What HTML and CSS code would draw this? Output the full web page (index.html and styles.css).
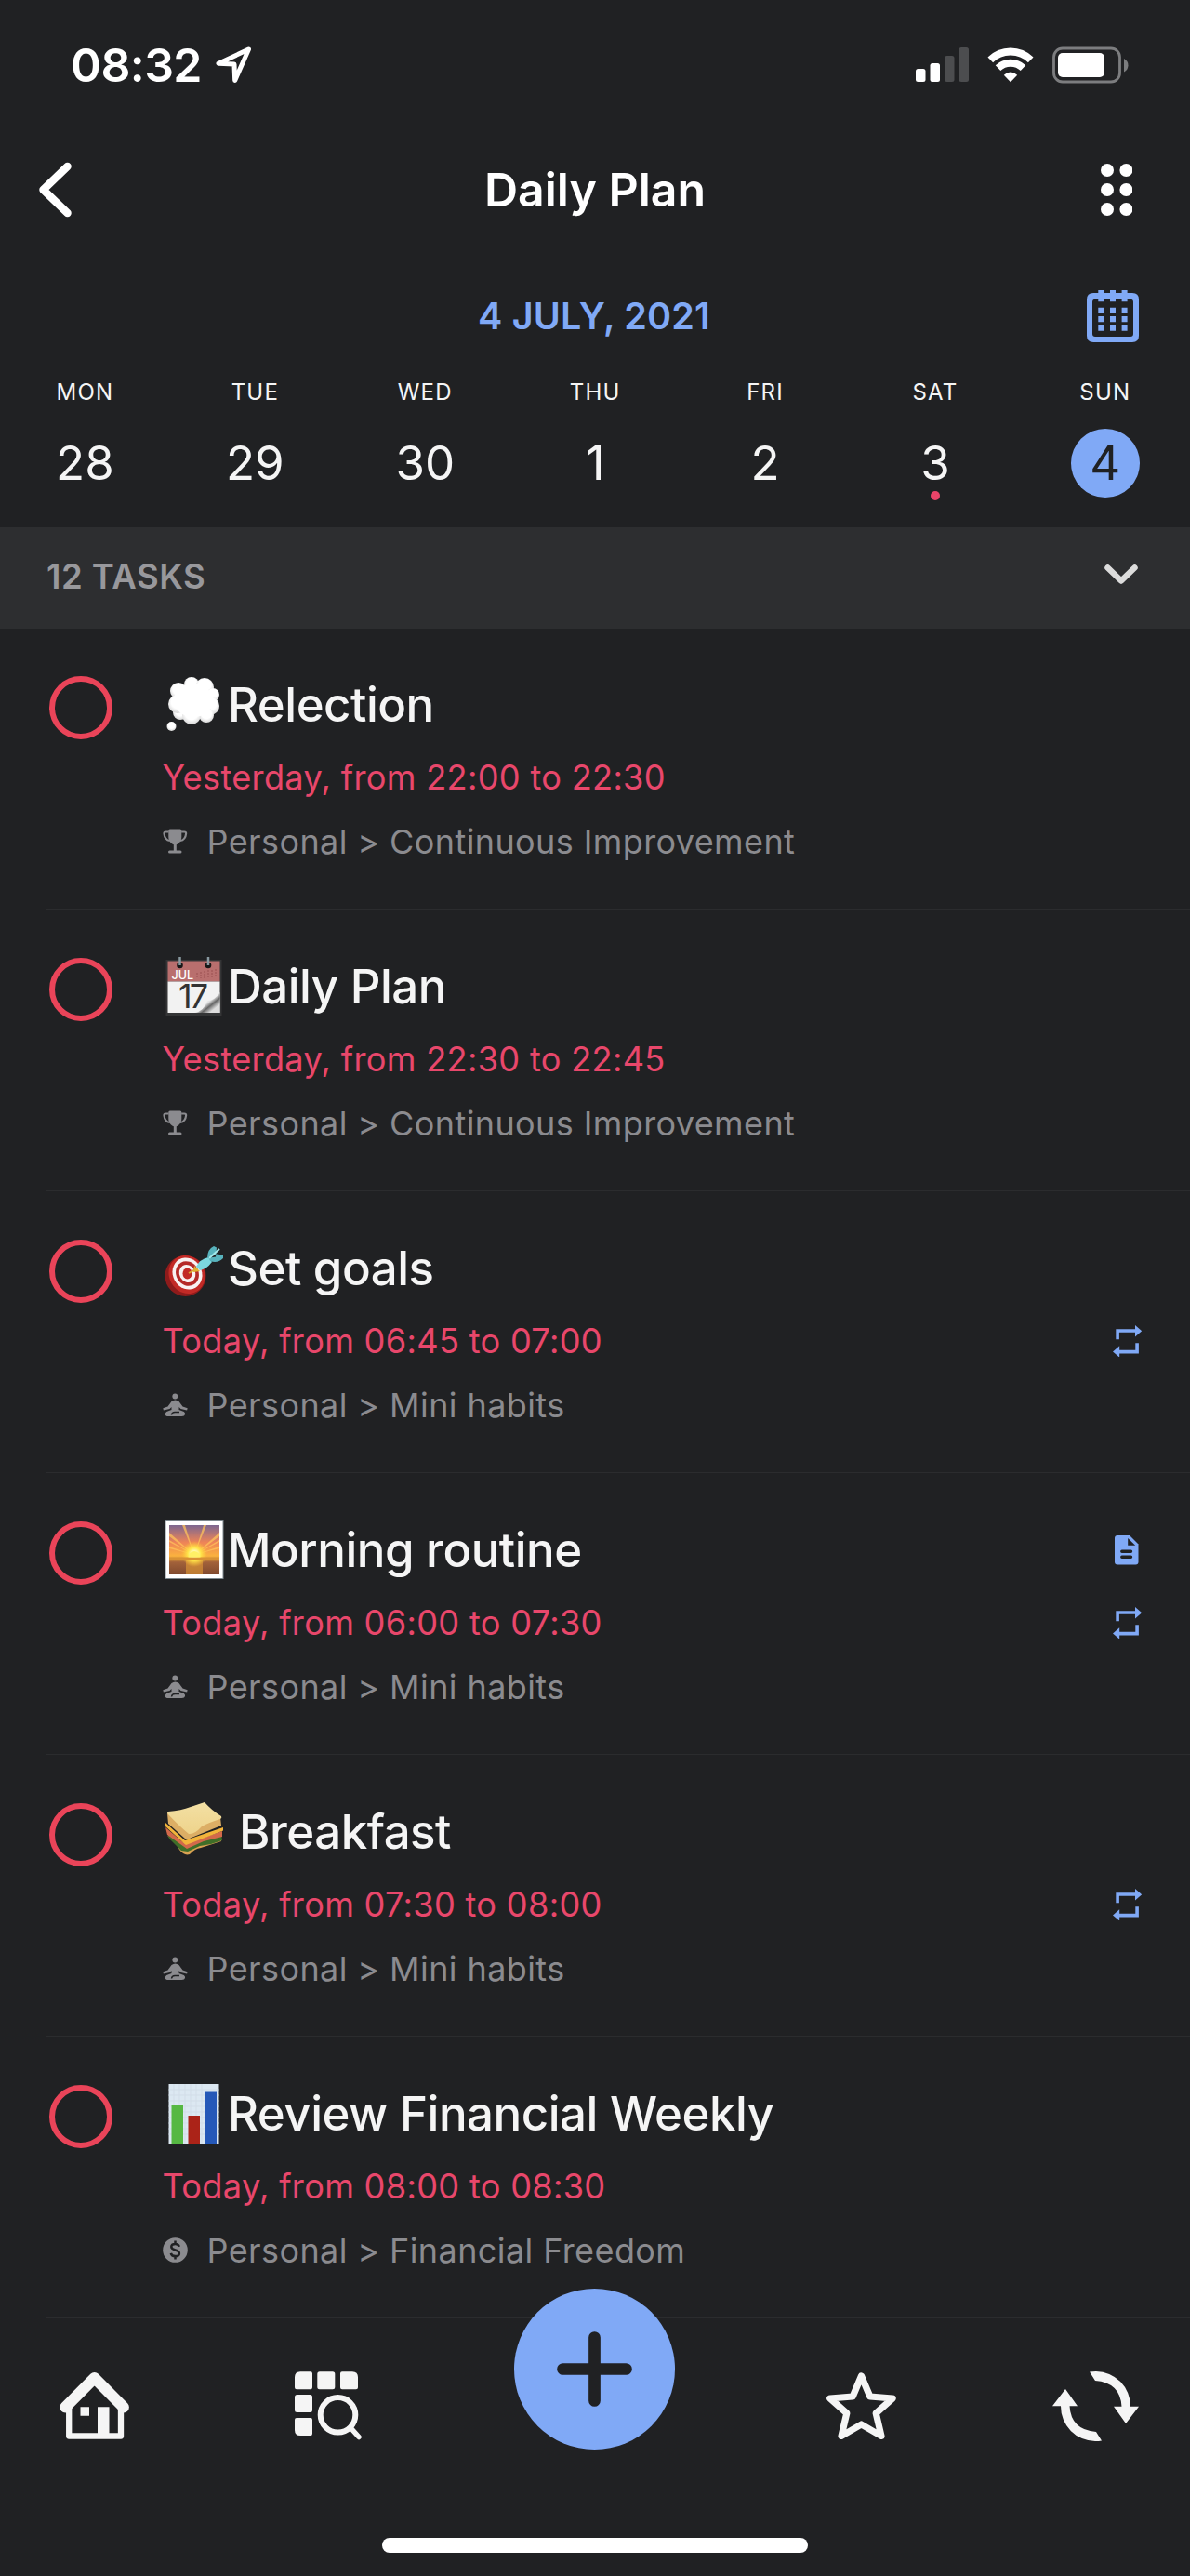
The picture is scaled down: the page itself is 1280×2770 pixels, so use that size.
FILE: index.html
```html
<!DOCTYPE html>
<html lang="en">
<head>
<meta charset="utf-8">
<title>Daily Plan</title>
<link rel="stylesheet" href="styles.css">
</head>
<body>
<svg class="defs" aria-hidden="true">
  <defs>
    <symbol id="repeat" viewBox="0 0 31.2 34.6">
      <g id="repeat-half"><path d="M5.1 15.3V6H25" fill="none" stroke="currentColor" stroke-width="3.6"/><path d="M24 0v12.4L31.2 6.2z" fill="currentColor"/></g>
      <use href="#repeat-half" transform="rotate(180 15.6 17.3)"/>
    </symbol>
    <symbol id="trophy" viewBox="0 0 27 27">
      <path d="M6.300 2q0-1.500 1.500-1.500h11q1.500 0 1.500 1.500v7c0 4-2.500 7-5.500 8.300v6.200H19q1.500 0 1.500 1.500t-1.500 1.500H7.500Q6 26.500 6 25t1.500-1.500h4.300v-6.200C8.800 16 6.300 13 6.300 9z" fill="currentColor"/>
      <path d="M6.500 3.500H3.300Q1.300 3.500 1.500 5.500c.4 4 2.200 7 6.300 7.500M20.100 3.500h3.200q2 0 1.800 2c-.4 4-2.200 7-6.300 7.500" fill="none" stroke="currentColor" stroke-width="2.200"/>
    </symbol>
    <symbol id="lotus" viewBox="0 0 27 27">
      <circle cx="13.300" cy="4.500" r="2.900" fill="currentColor"/>
      <path d="M9.500 10q4-3 8 0l4 5.500 5.200 1.800-.6 2.200-6.600-1.500-2-2v3l4 1.500q3 1 2.500 3.500-.4 2-3.500 2H6q-3 0-3.200-2Q2.500 21.500 5.500 20.500l4-1.500v-3l-2 2L.900 19.500l-.6-2.200 5.200-1.800z" fill="currentColor"/>
      <path d="M9.500 24.500q.5-3.200 4-3h4.500" fill="none" stroke="#202123" stroke-width="1.500"/>
    </symbol>
    <symbol id="dollar" viewBox="0 0 27 27">
      <circle cx="13.500" cy="13.500" r="13.300" fill="currentColor"/>
      <path d="M17.800 9.800c-.6-2-2-2.800-4.300-2.800-2.500 0-4.200 1.200-4.200 3.100 0 4.400 8.600 2.300 8.600 6.800 0 2-1.800 3.200-4.400 3.200-2.500 0-4.200-1-4.700-3.200M13.500 3.500V7M13.500 20v3.500" fill="none" stroke="#202123" stroke-width="2.500"/>
    </symbol>
    <radialGradient id="puff" cx=".5" cy=".4" r=".62"><stop offset=".55" stop-color="#fff"/><stop offset="1" stop-color="#d3d3d3"/></radialGradient>
    <linearGradient id="sky" x2="0" y2="1"><stop offset="0" stop-color="#7d6790"/><stop offset=".35" stop-color="#ee8457"/><stop offset=".62" stop-color="#fbb13f"/><stop offset=".68" stop-color="#e0a03c"/><stop offset=".75" stop-color="#a3623a"/><stop offset="1" stop-color="#804a2e"/></linearGradient>
    <radialGradient id="sun"><stop offset=".2" stop-color="#fffbc0"/><stop offset=".5" stop-color="#ffe64a"/><stop offset="1" stop-color="#ffc83a" stop-opacity="0"/></radialGradient>
    <linearGradient id="curl" x1="0" y1="0" x2="1" y2="1"><stop offset=".4" stop-color="#fff"/><stop offset=".52" stop-color="#ddd"/><stop offset=".64" stop-color="#666"/><stop offset=".8" stop-color="#ddd"/></linearGradient>
    <linearGradient id="bread" x2="0" y2="1"><stop offset="0" stop-color="#f3e0a4"/><stop offset="1" stop-color="#eed38b"/></linearGradient>
  </defs>
</svg>

<header>
  <div class="status">
    <div class="clock"><span>08:32</span>
      <svg width="39" height="40" viewBox="0 0 39 40"><path d="M35.500 3L3 18.300l17 .8.700 17.400z" fill="none" stroke="#fff" stroke-width="5" stroke-linejoin="round"/></svg>
    </div>
    <div class="signals">
      <svg width="57" height="38" viewBox="0 0 57 38"><g fill="#fff"><rect y="23" width="10.500" height="14" rx="2.500"/><rect x="15.500" y="17" width="10.500" height="20" rx="2.500"/></g><g fill="#4c4d4f"><rect x="31" y="9" width="10.500" height="28" rx="2.500"/><rect x="46.500" width="10.500" height="37" rx="2.500"/></g></svg>
      <svg class="wifi" width="50" height="38" viewBox="0 0 50 38"><path d="M3.300 13.300a31 31 0 0 1 43.400 0M11.500 22.100a19.500 19.500 0 0 1 27 0" fill="none" stroke="#fff" stroke-width="8"/><path d="M17.800 29.800Q25 23 32.200 29.800L25 37.300z" fill="#fff"/></svg>
      <svg width="82" height="40" viewBox="0 0 82 40"><rect x="1.500" y="2" width="71" height="36" rx="9.500" fill="none" stroke="#7c7d7f" stroke-width="2.800"/><rect x="6" y="7" width="50" height="26" rx="5" fill="#fff"/><path d="M77 13q4.500 2.500 4.500 7.200T77 27.500z" fill="#7c7d7f"/></svg>
    </div>
  </div>

  <div class="titlebar">
    <svg width="36" height="60" viewBox="0 0 36 60"><path d="M31.500 5L5.500 30l26 25" fill="none" stroke="#fff" stroke-width="8.500" stroke-linecap="round" stroke-linejoin="round"/></svg>
    <h1>Daily Plan</h1>
    <svg width="34" height="56" viewBox="0 0 34 56" fill="#fff"><circle cx="7" cy="7" r="7"/><circle cx="27.400" cy="7" r="7"/><circle cx="7" cy="28" r="7"/><circle cx="27.400" cy="28" r="7"/><circle cx="7" cy="49" r="7"/><circle cx="27.400" cy="49" r="7"/></svg>
  </div>

  <div class="month">
    <h2>4 JULY, 2021</h2>
    <svg width="56" height="56" viewBox="0 0 56 56" fill="#80a9f6"><path fill-rule="evenodd" d="M7 3h42q7 0 7 7v39q0 7-7 7H7q-7 0-7-7V10q0-7 7-7zm2 6.700q-3 0-3 3V47q0 3 3 3h38q3 0 3-3V12.700q0-3-3-3z"/><path d="M12.300 0h6v12.300h-6zM25 0h6v12.300h-6zM37.600 0h6v12.300h-6zM12.300 18.700h6V25h-6zM25 18.700h6V25h-6zM37.600 18.700h6V25h-6zM12.300 28h6v6.300h-6zM25 28h6v6.300h-6zM37.600 28h6v6.300h-6zM12.300 37.400h6v6.300h-6zM25 37.400h6v6.300h-6zM37.600 37.400h6v6.300h-6z"/></svg>
  </div>

  <div class="week">
    <div class="day"><span class="name">MON</span><span class="num">28</span></div>
    <div class="day"><span class="name">TUE</span><span class="num">29</span></div>
    <div class="day"><span class="name">WED</span><span class="num">30</span></div>
    <div class="day"><span class="name">THU</span><span class="num">1</span></div>
    <div class="day"><span class="name">FRI</span><span class="num">2</span></div>
    <div class="day"><span class="name">SAT</span><span class="num marked">3</span></div>
    <div class="day"><span class="name">SUN</span><span class="num selected">4</span></div>
  </div>
</header>

<section class="band">
  <span>12 TASKS</span>
  <svg width="36" height="22" viewBox="0 0 36 22"><path d="M3.500 3.500L18 17.500l14.500-14" fill="none" stroke="#dcdcdc" stroke-width="6.500" stroke-linecap="round" stroke-linejoin="round"/></svg>
</section>

<main>
  <article class="task">
    <span class="check"></span>
    <div class="info">
      <h3><svg class="emoji" viewBox="0 0 64 64" fill="url(#puff)"><circle cx="15" cy="17" r="9"/><circle cx="29" cy="10" r="8"/><circle cx="43" cy="13" r="10"/><circle cx="52" cy="21" r="7"/><circle cx="49" cy="33" r="10"/><circle cx="45" cy="43" r="8"/><circle cx="17" cy="40" r="8"/><circle cx="14" cy="31" r="10"/><circle cx="29" cy="43" r="10"/><ellipse cx="31" cy="27" rx="21" ry="18" fill="#fff"/><circle cx="7.500" cy="55" r="5"/></svg>Relection</h3>
      <p class="time"><span>Yesterday, from 22:00 to 22:30</span></p>
      <p class="path"><svg><use href="#trophy"/></svg>Personal &gt; Continuous Improvement</p>
    </div>
  </article>

  <article class="task">
    <span class="check"></span>
    <div class="info">
      <h3><svg class="emoji" viewBox="0 0 64 64"><rect x="1.500" y="3" width="60" height="60" fill="#343536"/><path d="M3.500 4.500h56v22h-56z" fill="#b96f6e"/><path d="M3.500 26.500h56V60h-56z" fill="#f2f2f2"/><path d="M59.500 38v22H32q10-1 14-13 8 0 13.500-9z" fill="url(#curl)"/><path d="M35 17v6M39 16v7M43 15v8M47 14v8M51 14v8M55 13v8" stroke="#9a5050" stroke-width="1" stroke-dasharray="2 1"/><text x="7.500" y="23.500" class="cal-month">JUL</text><text x="15" y="55" class="cal-day">17</text><circle cx="16.500" cy="9" r="3.300" fill="#171717"/><circle cx="47" cy="9" r="3.300" fill="#171717"/><path d="M16.500 0v9M47 0v9" stroke="#8899a0" stroke-width="2.500"/></svg>Daily Plan</h3>
      <p class="time"><span>Yesterday, from 22:30 to 22:45</span></p>
      <p class="path"><svg><use href="#trophy"/></svg>Personal &gt; Continuous Improvement</p>
    </div>
  </article>

  <article class="task">
    <span class="check"></span>
    <div class="info">
      <h3><svg class="emoji" viewBox="0 0 64 64"><ellipse cx="22.500" cy="40" rx="22" ry="22" fill="#8e1b1b"/><ellipse cx="24" cy="38.500" rx="19" ry="21" fill="#c22a26" transform="rotate(-30 24 38.500)"/><ellipse cx="24.500" cy="37.500" rx="15.500" ry="17.500" fill="#f8f2f2" transform="rotate(-30 24.500 37.500)"/><ellipse cx="24.500" cy="37.500" rx="12" ry="13.700" fill="#b52a28" transform="rotate(-30 24.500 37.500)"/><ellipse cx="24.500" cy="37.500" rx="8.500" ry="9.700" fill="#f8f2f2" transform="rotate(-30 24.500 37.500)"/><ellipse cx="24.500" cy="37.500" rx="5" ry="6" fill="#c22a26"/><path d="M26 37l9-5" stroke="#d9a52e" stroke-width="2"/><path d="M32 29l6 6-7 1z" fill="#e0b030"/><path d="M34 30q4-8 13-10l4 5q-6 8-13 9z" fill="#7cd8df"/><path d="M46 21q0-10 7-13l3 1.500-1 10zM49 24q8 3 14-3v-3.500l-7-1-8 4z" fill="#58b3bd"/><path d="M48 21l11-10" stroke="#a3e8ea" stroke-width="2"/></svg>Set goals</h3>
      <p class="time"><span>Today, from 06:45 to 07:00</span><svg class="repeat"><use href="#repeat"/></svg></p>
      <p class="path"><svg><use href="#lotus"/></svg>Personal &gt; Mini habits</p>
    </div>
  </article>

  <article class="task">
    <span class="check"></span>
    <div class="info">
      <h3><svg class="emoji" viewBox="0 0 64 64"><rect x="1" y=".5" width="62" height="62" fill="#fff" stroke="#7e898f"/><path d="M5 5h54v53H5z" fill="url(#sky)"/><path d="M32 37L19 5h3zM32 37L5 13v4zM32 37L5 28v2zM32 37L42 5h3zM32 37L59 13v4zM32 37L59 28v2zM32 37L5 21v2zM32 37L59 21v2z" fill="#ffc35b" opacity=".75"/><path d="M23 40h18v18H23z" fill="#e59d37" opacity=".6"/><circle cx="32" cy="36" r="14" fill="url(#sun)"/><path d="M5 39.500h54V43H5z" fill="#d99235"/><path d="M25.500 39.500a6.500 6.500 0 0 1 13 0z" fill="#fff166"/></svg>Morning routine
        <svg class="note" width="26" height="32" viewBox="0 0 26 32"><path d="M3 0h13l9.500 9.500V28.500q0 3-3 3H3q-3 0-3-3V3q0-3 3-3z" fill="#80a9f6"/><path d="M14.200 3v7.700h8z" fill="#202123"/><path d="M7.800 17.200h9.700M7.800 23.200h9.700" stroke="#202123" stroke-width="3.400" stroke-linecap="round"/></svg></h3>
      <p class="time"><span>Today, from 06:00 to 07:30</span><svg class="repeat"><use href="#repeat"/></svg></p>
      <p class="path"><svg><use href="#lotus"/></svg>Personal &gt; Mini habits</p>
    </div>
  </article>

  <article class="task">
    <span class="check"></span>
    <div class="info">
      <h3><svg class="emoji" viewBox="0 0 64 64"><path d="M3 36q10 8 13 15 5 7 11 5 5-6 12-7l22-7v-8L23 44z" fill="#d9a252"/><path d="M2 29l20 18 39-13 1 7-12 4-12 2-13 6-7-1L5 39z" fill="#3f6e28"/><path d="M1 27l21 18 40-14 0 6-20 5-18 8L3 35z" fill="#d2694a"/><path d="M1 22l21 19 41-14v3.500L23 46 1 26z" fill="#f2b43b"/><path d="M3 12l1 11 18 16q3 1.500 7-1l32-13-1-9z" fill="#dcae65"/><path d="M4 10q14-1 24-5L43 0q8 9 18 15 1 2-1 3-13 4-20 8-8 9-14 8Q13 23 4 13q-2-2 0-3z" fill="url(#bread)"/></svg><span class="spaced">Breakfast</span></h3>
      <p class="time"><span>Today, from 07:30 to 08:00</span><svg class="repeat"><use href="#repeat"/></svg></p>
      <p class="path"><svg><use href="#lotus"/></svg>Personal &gt; Mini habits</p>
    </div>
  </article>

  <article class="task">
    <span class="check"></span>
    <div class="info">
      <h3><svg class="emoji" viewBox="0 0 64 64"><path d="M4.500 0h54v64h-54z" fill="#dce8f2"/><path d="M4.500 6h54M4.500 12h54M4.500 18h54M4.500 24h54M4.500 30h54M4.500 36h54M4.500 42h54M4.500 48h54M4.500 54h54M10 0v64M16 0v64M22 0v64M28 0v64M34 0v64M40 0v64" stroke="#d2dde8"/><path d="M7.500 22.500H20V64H7.500z" fill="#56b843"/><path d="M25.500 34H38v30H25.500z" fill="#ab2318"/><path d="M43.500 8.500H56V64H43.500z" fill="#2558b8"/></svg>Review Financial Weekly</h3>
      <p class="time"><span>Today, from 08:00 to 08:30</span></p>
      <p class="path"><svg><use href="#dollar"/></svg>Personal &gt; Financial Freedom</p>
    </div>
  </article>
</main>

<footer>
  <nav>
    <svg width="76" height="72" viewBox="0 0 76 72"><path d="M10.200 34v34.500H66V34" fill="none" stroke="#f5f5f5" stroke-width="6.300" stroke-linejoin="round"/><path d="M6.300 37.500L37.600 6l31.300 31.500" fill="none" stroke="#f5f5f5" stroke-width="12" stroke-linecap="round" stroke-linejoin="round"/><path d="M22.500 37.300H32v9.400h-9.500zM41 37.300h12.500V67H41z" fill="#f5f5f5"/></svg>
    <svg width="72" height="74" viewBox="0 0 72 74" fill="#f5f5f5"><path d="M6 .300h11q2 0 2 2v15q0 2-2 2H2q-2 0-2-2v-11q0-6 6-6z"/><rect x="24.300" y=".3" width="19" height="19" rx="2.500"/><path d="M51 .300h11q6 0 6 6v11q0 2-2 2H51q-2 0-2-2v-15q0-2 2-2z"/><rect y="25" width="19" height="19" rx="2.500"/><path d="M2 50h15q2 0 2 2v15q0 2-2 2H6q-6 0-6-6V52q0-2 2-2z"/><g fill="none" stroke="#f5f5f5" stroke-width="6"><circle cx="46.500" cy="46.800" r="18.800"/><path d="M60 60.500l9 10" stroke-linecap="round" stroke-width="5.500"/></g></svg>
    <button class="add" aria-label="Add task"><svg width="81" height="81" viewBox="0 0 81 81"><path d="M6.500 40.500h68M40.500 6.500v68" stroke="#202123" stroke-width="12.700" stroke-linecap="round"/></svg></button>
    <svg width="75" height="72" viewBox="0 0 75 72"><path d="M37.500 4L46.800 26l24.400 2L53.200 44l5.800 24.500L37.500 56 16 68.500 21.800 44 3.800 28l24.400-2z" fill="none" stroke="#f5f5f5" stroke-width="7.200" stroke-linejoin="round"/></svg>
    <svg width="93" height="75" viewBox="0 0 93 75" fill="#f5f5f5"><path id="sync-arrow" d="M40 .600Q43 .100 47 .100A37 37.500 0 0 1 84 37.700h9L79 56 66 37.700h8.500Q73 12 46 10z"/><use href="#sync-arrow" transform="rotate(180 46.500 37.500)"/></svg>
  </nav>
  <div class="home-bar"></div>
</footer>
</body>
</html>
```
FILE: styles.css
```css
* { box-sizing: border-box; margin: 0; padding: 0; }

body {
  width: 1280px;
  background: #202123;
  color: #f5f5f5;
  font-family: Inter, "Liberation Sans", sans-serif;
}

svg { display: block; flex: none; }
.defs { position: absolute; width: 0; height: 0; }

.status {
  height: 140px;
  padding: 0 66px 0 76px;
  display: flex;
  align-items: center;
  justify-content: space-between;
}
.clock { display: flex; align-items: center; gap: 15px; }
.clock span { font-size: 50px; font-weight: 600; letter-spacing: -0.6px; color: #fff; }
.signals { display: flex; align-items: center; }
.signals .wifi { margin: 0 20px; }

.titlebar {
  height: 128px;
  padding: 0 62px 0 41px;
  display: grid;
  grid-template-columns: 100px 1fr 79px;
  align-items: center;
}
.titlebar h1 { text-align: center; font-size: 50px; font-weight: 600; letter-spacing: 0; color: #fff; }
.titlebar > svg:last-child { justify-self: end; }

.month {
  height: 143px;
  padding: 0 55px 0 109px;
  display: flex;
  align-items: center;
}
.month h2 { flex: 1; text-align: center; font-size: 39.500px; font-weight: 600; letter-spacing: 0.2px; color: #80a9f6; }

.week { height: 156px; display: grid; grid-template-columns: repeat(7, 182.9px); }
.day { display: flex; flex-direction: column; align-items: center; gap: 30px; }
.name { height: 20px; line-height: 21px; font-size: 24px; letter-spacing: 1.2px; }
.num {
  position: relative;
  width: 74px;
  height: 74px;
  line-height: 74px;
  text-align: center;
  font-size: 51px;
}
.selected { background: #80a9f6; border-radius: 50%; color: #202123; }
.marked::after {
  content: "";
  position: absolute;
  left: 32px;
  bottom: -3px;
  width: 10px;
  height: 10px;
  border-radius: 50%;
  background: #ea4469;
}

.band {
  height: 109px;
  padding: 0 56px 4px 50px;
  display: flex;
  align-items: center;
  justify-content: space-between;
  background: #2d2e30;
}
.band span { font-size: 36.500px; font-weight: 600; letter-spacing: 0.500px; color: #98989c; }
.band svg { margin-bottom: 4px; }

.task {
  height: 303px;
  margin-left: 49px;
  padding: 52px 52px 0 3.500px;
  display: flex;
  gap: 54px;
  border-top: 1px solid #2b2c2e;
}
.task:first-child { height: 301px; padding-top: 51px; border-top: 0; }
.check { flex: none; width: 68px; height: 68px; border: 6.500px solid #ea4459; border-radius: 50%; }
.info { flex: 1; }
.info h3 { height: 61px; display: flex; align-items: center; font-size: 51px; font-weight: 500; letter-spacing: -0.5px; }
.emoji { width: 64px; height: 64px; margin: 0 4.500px 0 2px; }
.cal-month { font-size: 12.500px; letter-spacing: 0; fill: #fff; }
.cal-day { font-size: 36px; font-weight: 400; letter-spacing: -3px; fill: #333; }
.spaced { margin-left: 12px; }
.note { margin-left: auto; margin-right: 3px; }
.time { height: 48px; margin-top: 24px; display: flex; align-items: center; justify-content: space-between; font-size: 36.200px; letter-spacing: 0.3px; color: #e8476b; }
.repeat { width: 31.200px; height: 34.600px; margin-right: -0.5px; color: #80a9f6; }
.path { height: 49px; margin-top: 20px; display: flex; align-items: center; gap: 21px; font-size: 36px; letter-spacing: 0.4px; color: #8b8b8f; }
.path svg { width: 27px; height: 27px; }

footer { height: 278px; margin-left: 49px; border-top: 1px solid #2b2c2e; }
nav {
  height: 188px;
  margin-left: -49px;
  display: grid;
  grid-template-columns: 203.400px 300px 273.200px 300px 203.400px;
  align-items: center;
  justify-items: center;
}
.add {
  width: 173px;
  height: 173px;
  margin-top: -80px;
  display: grid;
  place-items: center;
  border: 0;
  border-radius: 50%;
  background: #80a9f6;
}
.home-bar { width: 458px; height: 16px; margin: 48px 0 0 362px; border-radius: 8px; background: #fff; }
```
